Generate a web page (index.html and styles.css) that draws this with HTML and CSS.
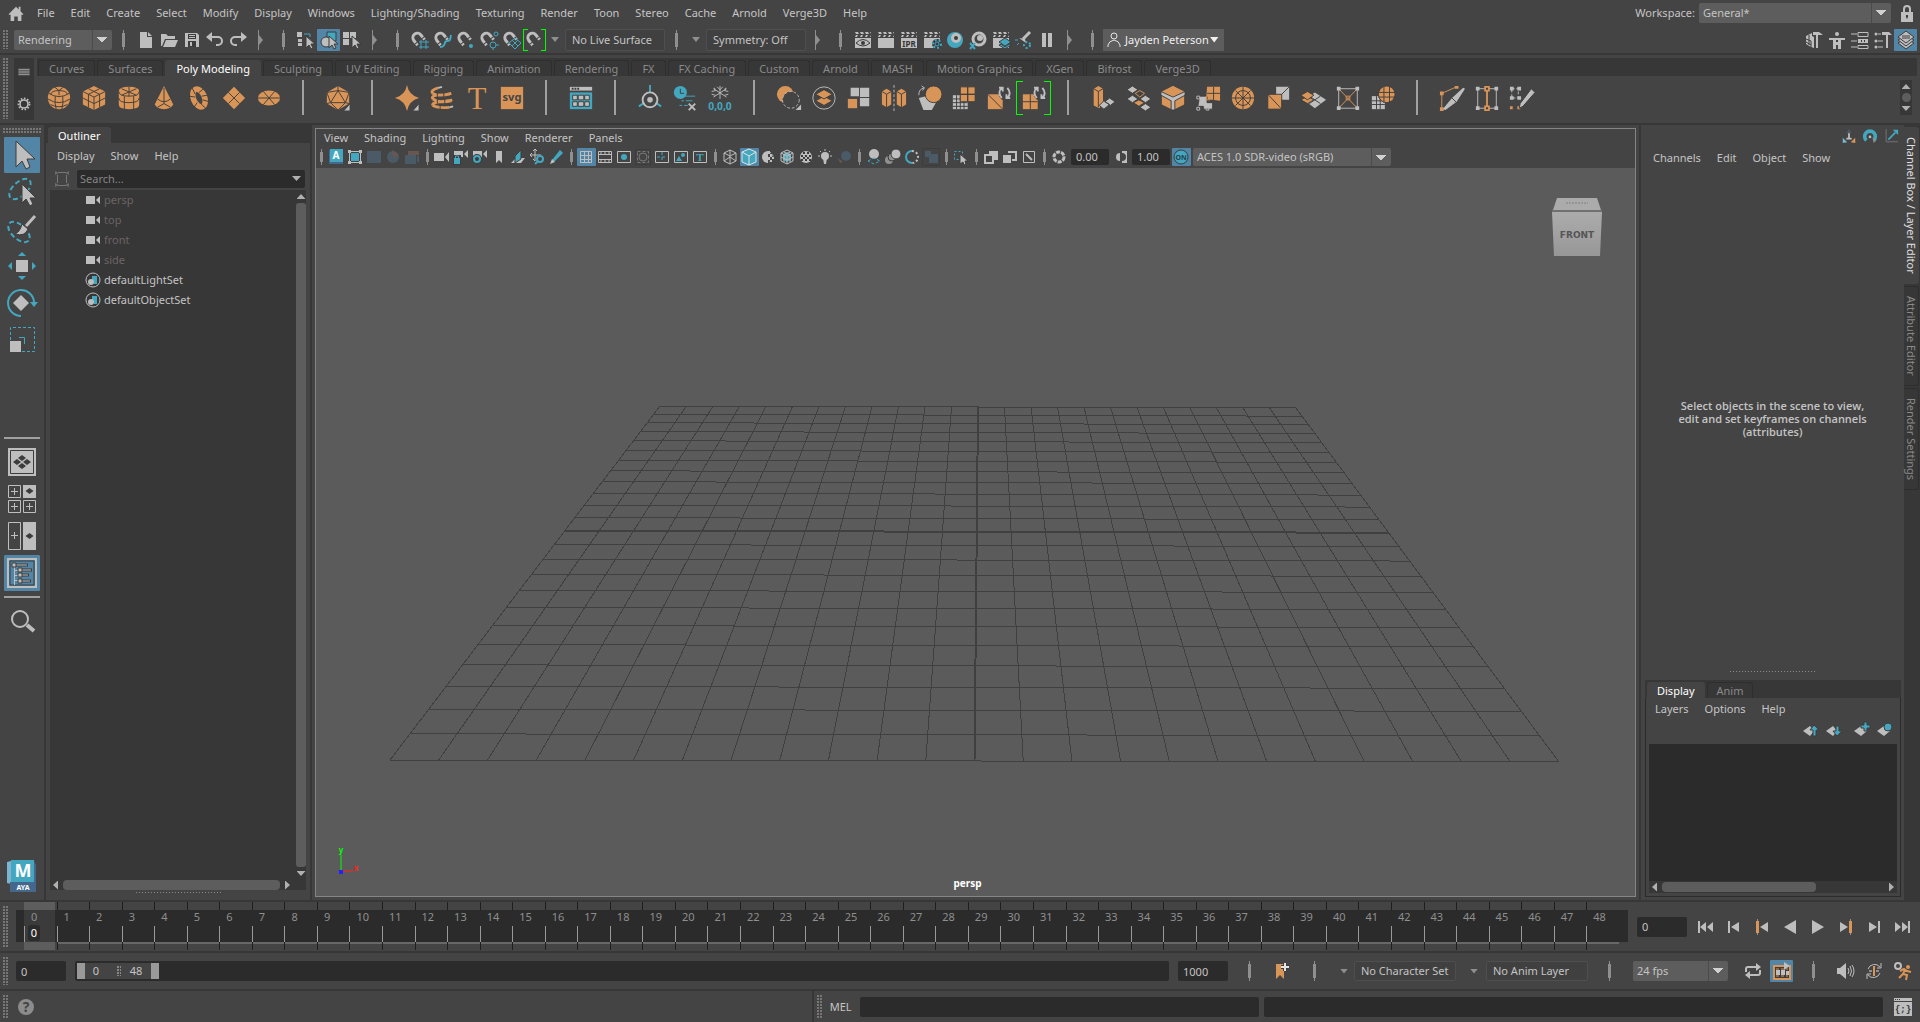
FILE: index.html
```html
<!DOCTYPE html>
<html lang="en">
<head>
    <meta charset="UTF-8">
    <meta name="viewport" content="width=device-width, initial-scale=1.0">
    <title>Maya</title>
    <link rel="stylesheet" href="styles.css">
</head>
<body>
    <!-- icon sprite -->
    <svg class="sprite" aria-hidden="true">
        <!-- 20px toolbar icons -->
        <symbol id="home" viewBox="0 0 20 20"><path class="g" d="M10 3L2 11v1h2v7h4v-5h4v5h4v-7h2v-1l-3-3V3h-2v3z"/></symbol>
        <symbol id="lock" viewBox="0 0 20 20"><path class="sg w2" d="M7 10V6a3 3 0 0 1 6 0v4"/><path class="g" d="M4 9h12v10H4z"/><path class="d" d="M9 12h2v2l-1 2-1-2z"/></symbol>
        <symbol id="new" viewBox="0 0 20 20"><path class="g" d="M4 2h7v5h5v11H4z"/><path class="g" d="M12 2l4 4h-4z"/></symbol>
        <symbol id="open" viewBox="0 0 20 20"><path class="g" d="M2 4h5l2 2h7v3H6l-3 7H2z"/><path class="g" d="M7 10h12l-3 7H4z"/></symbol>
        <symbol id="save" viewBox="0 0 20 20"><path class="g" d="M3 3h12l2 2v12H3z"/><path class="d" d="M6 4h8v5H6zM6 11h8v6H6z"/><path class="g" d="M7 5h6v1H7zM7 7h6v1H7zM8 12h2v4H8z"/></symbol>
        <symbol id="undo" viewBox="0 0 20 20"><path class="sg w2" d="M5 7h8a4 4 0 0 1 0 8h-2"/><path class="g" d="M1 7l6-5v10z"/></symbol>
        <symbol id="redo" viewBox="0 0 20 20"><path class="sg w2" d="M15 7H7a4 4 0 0 0 0 8h2"/><path class="g" d="M19 7l-6-5v10z"/></symbol>
        <symbol id="collapse" viewBox="0 0 20 20"><path class="m" d="M9 0h1v20H9zM10 5l4 5-4 5z"/></symbol>
        <symbol id="cursor" viewBox="0 0 20 20"><path class="g e" d="M10 6v12l3-3 2 4 2-1-2-4h4z"/></symbol>
        <symbol id="sel-hier" viewBox="0 0 20 20"><path class="g" d="M1 2h5v5H1zM2 9h4v3H2zM2 13h4v3H2z"/><path class="st" d="M8 4h6v3M14 9v2"/><use href="#cursor"/></symbol>
        <symbol id="sel-obj" viewBox="0 0 20 20"><path class="t e" d="M8 2h9v9H8z"/><circle class="g e" cx="7" cy="12" r="5"/><use href="#cursor"/></symbol>
        <symbol id="sel-comp" viewBox="0 0 20 20"><path class="g" d="M1 2h6v6H1zM8 2h6v6H8zM1 9h6v6H1z"/><use href="#cursor"/></symbol>
        <symbol id="magnet" viewBox="0 0 20 20"><g transform="rotate(-38 9 9)"><path class="sg w3" d="M4 10V7a4 4 0 0 1 9 0v3"/><path class="sg w3" d="M4 11v2M13 11v2"/></g></symbol>
        <symbol id="snap-grid" viewBox="0 0 20 20"><use href="#magnet"/><path class="st" d="M11 10v9M16 10v9M9 12h10M9 17h10"/></symbol>
        <symbol id="snap-curve" viewBox="0 0 20 20"><use href="#magnet"/><path class="st w2" d="M7 17c7 0 3-6 7-6s3-2 4-6"/></symbol>
        <symbol id="snap-point" viewBox="0 0 20 20"><use href="#magnet"/><circle class="t" cx="15" cy="16" r="2"/></symbol>
        <symbol id="snap-center" viewBox="0 0 20 20"><use href="#magnet"/><circle class="st" cx="17" cy="4" r="2"/><circle class="st" cx="14" cy="15" r="3"/><path class="st" d="M17 15h3M14 18v2"/></symbol>
        <symbol id="snap-plane" viewBox="0 0 20 20"><use href="#magnet"/><path class="st" d="M13 8l6 5-6 6-6-6zM10 10l6 6M16 10l-6 6"/></symbol>
        <symbol id="clap" viewBox="0 0 20 20"><path class="g" d="M2 2h3l1 2H3zM7 2h3l1 2H8zM12 2h3l1 2h-3zM17 2h1v2zM2 7h2l1-2H3zM7 7h2l1-2H8zM12 7h2l1-2h-2zM17 7h1V5zM2 8h16v10H2z"/></symbol>
        <symbol id="r-eye" viewBox="0 0 20 20"><use href="#clap"/><path class="sd" d="M3 13q7-7 14 0q-7 6-14 0z"/><circle class="d" cx="10" cy="13" r="2"/></symbol>
        <symbol id="r-ipr" viewBox="0 0 20 20"><use href="#clap"/><text class="ipr" x="10" y="17">IPR</text></symbol>
        <symbol id="r-set" viewBox="0 0 20 20"><use href="#clap"/><circle class="d" cx="15" cy="14" r="5"/><circle class="st w2 dash" cx="15" cy="14" r="4"/><circle class="st" cx="15" cy="14" r="2"/></symbol>
        <symbol id="r-hyper" viewBox="0 0 20 20"><circle class="t" cx="10" cy="10" r="8"/><circle class="g" cx="11" cy="8" r="5"/><circle class="d" cx="11" cy="8" r="2"/></symbol>
        <symbol id="r-hyperx" viewBox="0 0 20 20"><circle class="sg w3" cx="11" cy="9" r="6"/><circle class="g" cx="12" cy="8" r="3"/><path class="st w2" d="M2 13l5 6M7 13l-5 6"/></symbol>
        <symbol id="r-layers" viewBox="0 0 20 20"><use href="#clap"/><path class="t e" d="M14 8l6 4-6 4-6-4z"/><path class="t e" d="M8 15l6 4 6-4-2-1-4 3-4-3z"/></symbol>
        <symbol id="r-light" viewBox="0 0 20 20"><path class="sg w3" d="M9 9l7-7"/><path class="g" d="M5 8l6 1 1 4z"/><circle class="st w2 dash" cx="13" cy="15" r="3"/><path class="st" d="M1 10h3M3 15l2-2"/></symbol>
        <symbol id="r-pause" viewBox="0 0 20 20"><path class="g" d="M5 3h4v14H5zM11 3h4v14h-4z"/></symbol>
        <symbol id="user" viewBox="0 0 20 20"><circle class="sw" cx="10" cy="6" r="3"/><path class="sw" d="M4 17v-2q1-4 6-5q5 1 6 5v2"/></symbol>
        <symbol id="p-model" viewBox="0 0 20 20"><path class="g" d="M2 6l6-3v3l2 1v11l-3-1-5-3z"/><path class="g" d="M9 2h6l4 3h-5v13h-2V5H9z"/><path class="sd" d="M2 9l5 2v7M2 12l5 3M5 5v10"/></symbol>
        <symbol id="p-man" viewBox="0 0 20 20"><circle class="g" cx="10" cy="4" r="2"/><path class="g" d="M2 8h16v2h-4v9h-3v-4H9v4H6v-9H2z"/><path class="d" d="M9 10h2v2H9z"/></symbol>
        <symbol id="p-attr" viewBox="0 0 20 20"><path class="sg" d="M1 4h6M8 2.500h10v4H8zM1 11h6M1 17h6M8 15.500h10v3H8z"/><path class="g" d="M8 9h10v4H8z"/><path class="d" d="M11 10h1v2h-1zM14 10h1v2h-1z"/></symbol>
        <symbol id="p-tool" viewBox="0 0 20 20"><circle class="g" cx="3" cy="4" r="1.500"/><circle class="g" cx="3" cy="11" r="1.500"/><circle class="g" cx="3" cy="17" r="1.500"/><path class="sg" d="M5 4h3M5 11h5M5 17h5"/><path class="g" d="M9 2h7l3 3h-4v13h-2V5H9z"/></symbol>
        <symbol id="p-layers" viewBox="0 0 20 20"><path class="g e" d="M10 8l8 5-8 6-8-6z"/><path class="g e" d="M10 5l8 5-8 6-8-6z"/><path class="g e" d="M10 1l8 6-8 6-8-6z"/><path class="sd" d="M6 6h8M6 8h8"/></symbol>
        <symbol id="gear" viewBox="0 0 20 20"><circle class="sg w2" cx="10" cy="10" r="5"/><circle class="sg w2 dash" cx="10" cy="10" r="7"/></symbol>
        <symbol id="bars" viewBox="0 0 20 20"><path class="m" d="M3 6h14v2H3zM3 9h14v2H3zM3 12h14v2H3z"/></symbol>

        <!-- 28px shelf icons -->
        <symbol id="sphere" viewBox="0 0 28 28"><circle class="o" cx="14" cy="14" r="12"/><path class="sd" d="M3 9q11 7 22 0M2 15q12 8 24 0M5 21q9 5 18 0M14 6L9 2M14 6l5-4M14 6v5M14 6q-8 0-9 4M14 6q8 0 9 4M10 12q-1 8 1 14M18 12q1 8-1 14"/></symbol>
        <symbol id="cube" viewBox="0 0 28 28"><path class="o" d="M14 1l12 6v14l-12 6-12-6V7z"/><path class="sd" d="M2 7l12 6 12-6M14 13v14M8 4l12 6v14M20 4L8 10v14M2 14l12 6 12-6"/></symbol>
        <symbol id="cylinder" viewBox="0 0 28 28"><path class="o" d="M3 7q0-5 11-5t11 5v14q0 5-11 5T3 21z"/><path class="sd" d="M3 7q0 5 11 5t11-5M3 14q0 5 11 5t11-5M14 2v10M6 4l16 7M22 4L6 11M9 12v14M19 12v14"/></symbol>
        <symbol id="cone" viewBox="0 0 28 28"><path class="o" d="M14 1l10 20q-3 5-10 5T4 21z"/><path class="sd" d="M14 3v17M7 15q7 6 14 0M14 20l-7 4M14 20l7 4"/></symbol>
        <symbol id="torus" viewBox="0 0 28 28"><ellipse class="so w6" cx="14" cy="14" rx="6" ry="10" transform="rotate(-22 14 14)"/><path class="sd" d="M6 2l4 8M19 4l-5 4M3 12l7 1M17 12l6-1M12 19l-4 6M16 20l6 6M18 16l7 2"/></symbol>
        <symbol id="plane" viewBox="0 0 28 28"><path class="o" d="M14 2l12 12-12 12L2 14z"/><path class="sd" d="M8 8l12 12M20 8L8 20"/></symbol>
        <symbol id="disc" viewBox="0 0 28 28"><ellipse class="o" cx="14" cy="14" rx="12" ry="8"/><path class="sd" d="M2 14h24M8 7l12 14M20 7L8 21"/></symbol>
        <symbol id="platonic" viewBox="0 0 28 28"><path class="o" d="M14 1l12 7v12l-12 7-12-7V8z"/><path class="sd" d="M14 6L6 19h16zM14 1v5M14 6L2 8l4 11-4 1M14 6l12 2-4 11 4 1M6 19l8 8 8-8"/><path class="g e" d="M27 20v8h-7z"/></symbol>
        <symbol id="star" viewBox="0 0 28 28"><path class="o" d="M14 0q2 11 13 14q-11 3-13 14Q12 17 1 14Q12 11 14 0z"/><path class="g e" d="M27 20v8h-7z"/></symbol>
        <symbol id="helix" viewBox="0 0 28 28"><path class="so w3" d="M10 3q-9 3-6 6q7 4 20 0M4 15q-2-4 7-4t13-2M4 15q7 5 20 2M4 22q-1-3 9-4t12-2M4 22q4 3 18 2"/><path class="sg w2" d="M14 2l-4 1M22 24l4-1"/><path class="sd" d="M9 8v5M16 8v5M9 14v6M17 15v5M12 21v5"/></symbol>
        <symbol id="type" viewBox="0 0 28 28"><text class="type" x="14" y="26">T</text></symbol>
        <symbol id="svgfile" viewBox="0 0 28 28"><path class="o" d="M2 2h24v24H2z"/><text class="svgt" x="14" y="17">svg</text></symbol>
        <symbol id="uvwin" viewBox="0 0 28 28"><path class="g" d="M2 2h24v4H2z"/><path class="d" d="M4 3h2v2H4zM7 3h2v2H7zM10 3h2v2h-2z"/><path class="t" d="M2 8h24v18H2z"/><path class="g e" d="M5 11h5v5H5zM11 11h6v5h-6zM18 11h5v5h-5zM5 18h5v5H5zM11 18h6v5h-6zM18 18h5v5h-5z"/></symbol>
        <symbol id="pivot" viewBox="0 0 28 28"><path class="st w2" d="M14 0v8M2 23l6-4M26 23l-6-4"/><circle class="sg w2" cx="14" cy="16" r="8"/><circle class="g" cx="14" cy="16" r="3"/></symbol>
        <symbol id="history" viewBox="0 0 28 28"><circle class="t" cx="9" cy="8" r="7"/><path class="sd" d="M9 4v5h4"/><path class="st" d="M14 12h11M10 17h3M15 17h7M8 22h3M13 22h4"/><path class="sg w2" d="M18 20l7 7M25 20l-7 7"/></symbol>
        <symbol id="freeze" viewBox="0 0 28 28"><path class="sg" d="M14 1v14M7 4l14 9M21 4L7 13M11 2l3 3 3-3M5 7l4-1-1-3M23 7l-4-1 1-3M5 10l4 1M23 10l-4 1"/><text class="zeros" x="14" y="27">0,0,0</text></symbol>
        <symbol id="smooth" viewBox="0 0 28 28"><circle class="o" cx="10" cy="10" r="9"/><circle class="b" cx="16" cy="16" r="9"/><circle class="sg dots" cx="16" cy="16" r="9"/><path class="g" d="M27 21v6h-6z"/></symbol>
        <symbol id="boolean" viewBox="0 0 28 28"><circle class="sg" cx="14" cy="14" r="12"/><path class="o e" d="M14 12l9 5-9 5-9-5z"/><path class="o e" d="M14 5l9 5-9 5-9-5z"/></symbol>
        <symbol id="combine" viewBox="0 0 28 28"><path class="g" d="M5 3h9v9H5zM15 3h10v10H15zM15 14h10v9H15z"/><path class="o" d="M2 15h10v10H2z"/></symbol>
        <symbol id="mirror" viewBox="0 0 28 28"><path class="o" d="M1 7l5-3 5 3v14l-5 3-5-3zM17 7l5-3 5 3v14l-5 3-5-3z"/><path class="sd" d="M1 7l5 3 5-3M6 10v14M17 7l5 3 5-3M22 10v14"/><path class="sg dots" d="M14 0v28"/></symbol>
        <symbol id="project" viewBox="0 0 28 28"><path class="g" d="M3 14l12-3 7 7-5 9H8z"/><circle class="o e" cx="19" cy="10" r="9"/><path class="sg" d="M3 11Q3 4 9 3M6 1l3 2-2 3"/></symbol>
        <symbol id="remesh" viewBox="0 0 28 28"><path class="g" d="M2 11h16v15H2z"/><path class="sd" d="M2 15h16M2 19h16M2 23h16M6 11v15M10 11v15M14 11v15"/><path class="o e" d="M10 2h8v8h-8zM18 2h8v8h-8zM10 10h8v8h-8zM18 10h8v8h-8z"/></symbol>
        <symbol id="cycle" viewBox="0 0 28 28"><path class="sg w2" d="M17 14q-5-6 0-11M23 3q5 6 0 11M14 3h4v4M26 14h-4v-4"/></symbol>
        <symbol id="triangulate" viewBox="0 0 28 28"><path class="o" d="M2 10h16v16H2z"/><path class="sd" d="M2 10l16 16"/><path class="b" d="M14 0h14v16H17l-3-4z"/><use href="#cycle"/></symbol>
        <symbol id="quad" viewBox="0 0 28 28"><path class="o" d="M2 10h16v16H2z"/><path class="sd" d="M10 10v16M2 18h16"/><path class="b" d="M14 0h14v16H17l-3-4z"/><use href="#cycle"/></symbol>
        <symbol id="extrude" viewBox="0 0 28 28"><path class="o" d="M4 4l5-3 5 3v16l-4 5-6-3z"/><path class="sd" d="M4 4l5 3 5-3M9 7v17"/><path class="g e" d="M15 17l6 4-6 5-5-4zM21 14l6 4-5 4-6-4z"/></symbol>
        <symbol id="bridge" viewBox="0 0 28 28"><path class="g e" d="M8 1l6 4-6 4-6-4zM8 11l6 4-6 4-6-4zM22 11l6 4-6 4-6-4zM22 20l6 4-6 4-6-4z"/><path class="so" d="M16 6l5 3-5 4-5-4z"/><path class="o e" d="M15 16l6 3-6 4-6-4z"/></symbol>
        <symbol id="bevel" viewBox="0 0 28 28"><path class="o" d="M14 1l12 6v14l-12 6-12-6V7z"/><path class="g e" d="M1 7l13 6 13-6v4l-11 6v10h-4V17L1 11z"/><path class="o" d="M14 1l11 6-11 5L3 7z"/></symbol>
        <symbol id="appendp" viewBox="0 0 28 28"><path class="o" d="M13 2h14v15l-15-2z"/><path class="sd" d="M20 2v14M13 9h14"/><path class="g e" d="M5 12h8v7h6v7H9v-3H3z"/><path class="sg" d="M2 12h3v3H2zM2 24h3v3H2zM12 24h3v3h-3z"/><path class="so" d="M12 12h4v4h-4z"/></symbol>
        <symbol id="fill" viewBox="0 0 28 28"><circle class="o" cx="14" cy="14" r="12"/><circle class="sd" cx="14" cy="14" r="8"/><path class="sd" d="M14 2v24M2 14h24M6 6l16 16M22 6L6 22"/></symbol>
        <symbol id="collapse-e" viewBox="0 0 28 28"><path class="g" d="M12 2h14v14H18l-6-5z"/><path class="sd" d="M26 2L16 12"/><path class="o e" d="M3 10h15v16H3z"/><path class="sd" d="M3 10l15 16"/></symbol>
        <symbol id="flip" viewBox="0 0 28 28"><path class="g" d="M16 8l12 8-12 9-12-9z"/><path class="sd" d="M10 12l12 8M22 12L10 20"/><path class="o e" d="M8 12l7 4-7 4-7-4z"/><path class="o e" d="M8 7l7 4-7 5-7-5z"/></symbol>
        <symbol id="lattice" viewBox="0 0 28 28"><path class="sg" d="M4 4h20v21H4z"/><path class="so" d="M4 4l20 21M24 4L4 25M12 12h4v4h-4z"/><path class="g" d="M2 2h4v4H2zM22 2h4v4h-4zM2 23h4v4H2zM22 23h4v4h-4z"/></symbol>
        <symbol id="sculpt" viewBox="0 0 28 28"><path class="g" d="M2 12h14v14H2z"/><path class="sd" d="M2 17h14M2 21h14M7 12v14M11 12v14"/><circle class="o e" cx="18" cy="10" r="9"/><path class="sd" d="M15 2v17M21 2v17M9 8h18M9 13h18"/></symbol>
        <symbol id="multicut" viewBox="0 0 28 28"><path class="so" d="M3 25V9l16-7"/><path class="o" d="M1 7h4v4H1zM17 1h4v3h-4zM1 24h4v4H1z"/><path class="g" d="M26 3l2 1-9 14-12 9-3-1 10-12z"/><path class="sd" d="M14 14l5 5"/></symbol>
        <symbol id="connect" viewBox="0 0 28 28"><path class="sg" d="M4 4h20v21H4z"/><path class="so w2" d="M14 4v21"/><path class="g" d="M2 2h4v4H2zM22 2h4v4h-4zM2 23h4v4H2zM22 23h4v4h-4z"/><path class="o" d="M11 1h6v6h-6zM11 22h6v6h-6z"/><path class="d" d="M13 3h2v2h-2zM13 24h2v2h-2z"/></symbol>
        <symbol id="quaddraw" viewBox="0 0 28 28"><path class="sg dots" d="M3 4h7v10H3z"/><path class="g" d="M1 2h4v4H1zM9 2h4v4H9zM1 12h4v4H1zM9 12h4v4H9z"/><path class="o" d="M1 23h3v3H1zM9 23h3v3H9z"/><path class="g e" d="M24 4l4 4-13 15-4 2 1-5z"/></symbol>

        <!-- 36px tool box icons -->
        <symbol id="t-cursor" viewBox="0 0 36 36"><path class="g e" d="M12 4v26l6-6 4 8 4-2-3-8h8z"/></symbol>
        <symbol id="t-lasso" viewBox="0 0 36 36"><ellipse class="st w2 lasso" cx="16" cy="15" rx="13" ry="7" transform="rotate(-42 16 15)"/><path class="g e" d="M18 10v19l4-4 4 7 3-2-3-6h6z"/></symbol>
        <symbol id="t-paint" viewBox="0 0 36 36"><ellipse class="st w2 lasso" cx="15" cy="21" rx="13" ry="7" transform="rotate(42 15 21)"/><path class="sg w3" d="M31 5l-9 10"/><path class="g e" d="M18 13l6 5q-3 8-13 5q5-2 7-10z"/></symbol>
        <symbol id="t-move" viewBox="0 0 36 36"><path class="g" d="M12 12h12v12H12z"/><path class="t" d="M18 4l4 4h-8zM18 32l4-4h-8zM4 18l4-4v8zM32 18l-4-4v8z"/></symbol>
        <symbol id="t-rotate" viewBox="0 0 36 36"><path class="st w2" d="M17 31a13 13 0 1 1 13-14"/><path class="t" d="M26 17h8l-4 5z"/><path class="g" d="M17 10l8 8-8 8-8-8z"/></symbol>
        <symbol id="t-scale" viewBox="0 0 36 36"><path class="st dots" d="M6.500 18V5.500h24v24H18"/><path class="st" d="M15 15.500h5.500V22"/><path class="g" d="M6 19h11v11H6z"/></symbol>
        <symbol id="l-single" viewBox="0 0 36 36"><path class="g" d="M4 4h28v28H4z"/><path class="sd" d="M6.500 6.500h23v23h-23z"/><path class="d" d="M18 11l4 3-4 3-4-3zM13 15l4 3-4 3-4-3zM23 15l4 3-4 3-4-3zM18 19l4 3-4 3-4-3z"/></symbol>
        <symbol id="l-four" viewBox="0 0 36 36"><path class="sg" d="M4.500 4.500h12v12h-12zM4.500 19.500h12v12h-12zM19.500 19.500h12v12h-12zM10.500 7v7M7 10.500h7M10.500 22v7M7 25.500h7M25.500 22v7M22 25.500h7"/><path class="g" d="M19 4h13v13H19z"/><path class="d" d="M25.500 7l4 3-4 3-4-3z"/></symbol>
        <symbol id="l-two" viewBox="0 0 36 36"><path class="sg" d="M4.500 4.500h12v27h-12zM10.500 14v7M7 17.500h7"/><path class="g" d="M19 4h13v28H19z"/><path class="d" d="M25.500 15l4 3-4 3-4-3z"/></symbol>
        <symbol id="l-outliner" viewBox="0 0 36 36"><path class="sg w2" d="M4 4h28v28H4z"/><path class="sd" d="M6 6h24v24H6z"/><path class="sg" d="M10.500 10v20M11 15.500h5M11 20.500h5M11 25.500h5"/><path class="sd w3" d="M12 10h12M18 15h10M18 20h7M18 26h9"/><path class="sg" d="M12 10h11M18 15h9M18 20h6M18 26h8"/><path class="g e" d="M8 8h4v4H8zM14 13h4v4h-4zM14 18h4v4h-4zM14 24h4v4h-4z"/></symbol>
        <symbol id="t-search" viewBox="0 0 36 36"><circle class="sg w2" cx="16" cy="16" r="8"/><path class="sg w4" d="M23 22l7 6"/></symbol>
        <symbol id="maya" viewBox="0 0 36 36"><path class="lb" d="M3 3l4-1v23l-4-1z"/><path class="t" d="M7 1h23v22H7z"/><path class="nb" d="M6 23h24V2l2 4v27H6z"/><text class="maya-m" x="19" y="18">M</text><text class="maya-s" x="19" y="31">AYA</text></symbol>

        <!-- 18px panel icons -->
        <symbol id="v-a" viewBox="0 0 18 18"><path class="nb" d="M2 2h14v14H2z"/><path class="t" d="M3 1h13v13H3z"/><text class="va" x="9" y="11">A</text></symbol>
        <symbol id="v-frame" viewBox="0 0 18 18"><path class="sg" d="M3.500 3.500h11v11h-11z"/><path class="g" d="M2 2h3v3H2zM13 2h3v3h-3zM2 13h3v3H2zM13 13h3v3h-3z"/><path class="t" d="M5 5h8v8H5z"/></symbol>
        <symbol id="v-dim1" viewBox="0 0 18 18"><path class="nt" d="M2 3h14v12H2z"/></symbol>
        <symbol id="v-dim2" viewBox="0 0 18 18"><circle class="nt" cx="9" cy="9" r="6"/><path class="nr" d="M8 2l7 5-6 3z"/></symbol>
        <symbol id="v-dim3" viewBox="0 0 18 18"><path class="nt" d="M2 7h11v9H2z"/><path class="nr" d="M5 3h11v4H5z"/><path class="nt" d="M14 8h2v6h-2z"/></symbol>
        <symbol id="v-cam" viewBox="0 0 18 18"><path class="g" d="M1 5h10v8H1zM12 9l4-5v10z"/></symbol>
        <symbol id="v-camlock" viewBox="0 0 18 18"><path class="g" d="M2 3h9v6H2zM12 6l4-4v8z"/><path class="d" d="M1 7h8v10H1z"/><path class="t" d="M2 10h6v6H2z"/><path class="st" d="M3.500 10V8h3v2"/></symbol>
        <symbol id="v-camgear" viewBox="0 0 18 18"><path class="g" d="M2 3h9v6H2zM12 6l4-4v8z"/><circle class="d" cx="6" cy="11" r="5"/><circle class="st w2" cx="6" cy="11" r="3"/></symbol>
        <symbol id="v-mark" viewBox="0 0 18 18"><path class="g" d="M6 3h6v12l-3-3-3 3z"/></symbol>
        <symbol id="v-plane" viewBox="0 0 18 18"><path class="g" d="M2 15l5-5h9l-4 5z"/><path class="t e" d="M6 8l6-6v9l-6 4z"/></symbol>
        <symbol id="v-pan" viewBox="0 0 18 18"><path class="sg" d="M7 1v12M2 7h11M5 3l2-2 2 2M4 5L2 7l2 2M5 11l2 2"/><circle class="st w2" cx="12" cy="11" r="3"/><path class="st w2" d="M10 13l-3 3"/></symbol>
        <symbol id="v-pencil" viewBox="0 0 18 18"><path class="t" d="M13 2l3 3-9 9-3 1 1-3z"/><path class="g" d="M5 11l3 3-5 2z"/></symbol>
        <symbol id="v-grid" viewBox="0 0 18 18"><path class="sg" d="M3.500 3.500h11v11h-11zM7.500 3v12M11.500 3v12M3 7.500h12M3 11.500h12"/></symbol>
        <symbol id="v-film" viewBox="0 0 18 18"><path class="sg" d="M2.500 3.500h13v11h-13zM3 6.500h12M3 11.500h12"/><path class="sg dash" d="M4 5h10M4 13h10"/></symbol>
        <symbol id="v-res" viewBox="0 0 18 18"><path class="sg" d="M2.500 3.500h13v11h-13z"/><circle class="t" cx="9" cy="9" r="3"/></symbol>
        <symbol id="v-gate" viewBox="0 0 18 18"><path class="sd" d="M1.500 1.500h15v15h-15z"/><circle class="sm" cx="9" cy="9" r="4"/><path class="sm dots" d="M3.500 3.500h11v11h-11z"/></symbol>
        <symbol id="v-safe" viewBox="0 0 18 18"><path class="sg" d="M2.500 3.500h13v11h-13z"/><path class="st dots" d="M9 4v10M4 9h10"/></symbol>
        <symbol id="v-action" viewBox="0 0 18 18"><path class="sg" d="M2.500 3.500h13v11h-13z"/><circle class="t" cx="11" cy="7" r="2"/><path class="t" d="M4 13l3-5 3 5z"/></symbol>
        <symbol id="v-title" viewBox="0 0 18 18"><path class="sg" d="M2.500 3.500h13v11h-13z"/><text class="vt" x="9" y="13">T</text></symbol>
        <symbol id="v-wire" viewBox="0 0 18 18"><path class="sg" d="M9 2l6 3v8l-6 3-6-3V5zM3 5l6 3 6-3M9 8v8M9 2v5M3 13l6-4 6 4"/></symbol>
        <symbol id="v-shade" viewBox="0 0 18 18"><path class="t" d="M9 1l7 3v10l-7 3-7-3V4z"/><path class="sw" d="M9 1l7 3v10l-7 3-7-3V4zM2 4l7 4 7-4M9 8v9"/></symbol>
        <symbol id="v-half" viewBox="0 0 18 18"><circle class="sg dash" cx="9" cy="9" r="5"/><path class="g" d="M9 3a6 6 0 0 0 0 12z"/><path class="g" d="M9 3h2v3H9zM11 6h2v3h-2zM9 9h2v3H9zM13 9h2v2h-2zM11 12h2v2h-2z"/></symbol>
        <symbol id="v-wiresh" viewBox="0 0 18 18"><path class="t" d="M9 4l4 2v6l-4 2-4-2V6z"/><path class="sg" d="M9 2l6 3v8l-6 3-6-3V5zM3 5l6 3 6-3M9 8v8M6 4l6 3v7M12 4L6 7v7M3 9l6 3 6-3"/></symbol>
        <symbol id="v-tex" viewBox="0 0 18 18"><circle class="g" cx="9" cy="9" r="6"/><path class="d" d="M6 4h2v2H6zM10 4h2v2h-2zM4 7h2v2H4zM8 7h2v2H8zM12 7h2v2h-2zM6 9h2v2H6zM10 9h2v2h-2zM4 11h2v2H4zM8 11h2v2H8zM12 11h2v2h-2z"/></symbol>
        <symbol id="v-light" viewBox="0 0 18 18"><circle class="g" cx="9" cy="8" r="4"/><path class="g" d="M7 10h4l-1 6H8z"/><path class="sg" d="M9 1v2M2 8h2M14 8h2M4 3l1 1M14 3l-1 1"/></symbol>
        <symbol id="v-shadow" viewBox="0 0 18 18"><circle class="nt" cx="11" cy="8" r="5"/><path class="nr" d="M3 10l5 4-3 1z"/></symbol>
        <symbol id="v-ao" viewBox="0 0 18 18"><circle class="g" cx="9" cy="6" r="5"/><path class="st dots" d="M3 13l6-3 6 3-6 3z"/></symbol>
        <symbol id="v-blur" viewBox="0 0 18 18"><circle class="m" cx="5" cy="12" r="4"/><circle class="m e" cx="8" cy="9" r="4"/><circle class="g e" cx="12" cy="6" r="5"/></symbol>
        <symbol id="v-aa" viewBox="0 0 18 18"><path class="st w2" d="M9 3a6 6 0 0 0 0 12"/><path class="sg w2 dash" d="M9 3a6 6 0 0 1 0 12"/></symbol>
        <symbol id="v-dof" viewBox="0 0 18 18"><path class="sd" d="M.5.5h17v17H.5z"/><path class="nt" d="M3 3h6v6H3zM7 6h9v9H7z"/></symbol>
        <symbol id="v-iso" viewBox="0 0 18 18"><path class="st dash" d="M2.500 3.500h8v8h-8z"/><path class="g e" d="M8 6v10l3-2 1 3 2-1-1-3h3z"/></symbol>
        <symbol id="v-xray" viewBox="0 0 18 18"><path class="g" d="M7 3h9v9h-5V8H7z"/><path class="sg w2" d="M3 7h8v8H3z"/></symbol>
        <symbol id="v-xj" viewBox="0 0 18 18"><path class="sg w2" d="M7 4h8v8h-4"/><path class="g" d="M2 7h8v8H2z"/></symbol>
        <symbol id="v-exp" viewBox="0 0 18 18"><path class="sg" d="M3.500 3.500h11v11h-11z"/><path class="sg w2" d="M6 6l6 6"/></symbol>
        <symbol id="v-iris" viewBox="0 0 18 18"><circle class="sg w3 iris" cx="9" cy="9" r="5"/></symbol>
        <symbol id="v-gamma" viewBox="0 0 18 18"><path class="g" d="M11 3h5v12h-5v-2a4 4 0 0 0 0-8z"/><path class="g" d="M9 5a4 4 0 0 0 0 8z"/></symbol>
        <symbol id="v-on" viewBox="0 0 18 18"><circle class="t" cx="9" cy="9" r="7"/><circle class="sd" cx="9" cy="9" r="7"/><text class="ont" x="9" y="12">ON</text></symbol>
        <symbol id="cam-row" viewBox="0 0 18 18"><path class="g" d="M2 5h9v8H2zM12 9l4-4v8z"/></symbol>
        <symbol id="set-row" viewBox="0 0 18 18"><circle class="sg" cx="9" cy="9" r="7"/><path class="t" d="M8 5h5v8h-3l-2-4z"/><circle class="g" cx="7" cy="11" r="3"/></symbol>
        <symbol id="o-filter" viewBox="0 0 18 18"><path class="sm" d="M5 2.500h8M5 15.500h8M4.500 5v8M13.500 5v8"/><path class="dm" d="M2 1l4 2-4 2zM16 1l-4 2 4 2zM2 13l4 2-4 2zM16 13l-4 2 4 2z"/></symbol>
        <symbol id="c-manip" viewBox="0 0 18 18"><path class="sg w2" d="M9 5v7"/><path class="nt" d="M6 6l3-5 3 5z"/><path class="lb" d="M2 17v-6l5 5z"/><path class="o" d="M16 17v-6l-5 5z"/><path class="g" d="M6 11h6v2H6z"/></symbol>
        <symbol id="c-speed" viewBox="0 0 18 18"><path class="st w4" d="M5 14a6 6 0 1 1 8 0"/><path class="m" d="M12 10l4 4-3 3z"/><circle class="g" cx="9" cy="10" r="1.500"/></symbol>
        <symbol id="c-graph" viewBox="0 0 18 18"><path class="sm" d="M3.500 1v14.500H17"/><path class="st w2" d="M6 13l8-8"/><path class="t" d="M17 2v6l-6-6z"/></symbol>
        <symbol id="ly-base" viewBox="0 0 18 18"><path class="g" d="M1 10l7-5 4 5-4 5z"/></symbol>
        <symbol id="ly-up" viewBox="0 0 18 18"><use href="#ly-base"/><path class="t e" d="M12 4l5 5h-3v6h-3V9H8z"/></symbol>
        <symbol id="ly-down" viewBox="0 0 18 18"><use href="#ly-base"/><path class="t e" d="M12 15l5-5h-3V5h-3v5H8z"/></symbol>
        <symbol id="ly-new" viewBox="0 0 18 18"><path class="g" d="M1 10l7-5 6 5-6 5z"/><path class="t e" d="M11 1h3v3h3v3h-3v3h-3V7H8V4h3z"/></symbol>
        <symbol id="ly-sel" viewBox="0 0 18 18"><path class="g" d="M1 10l7-5 6 5-6 5z"/><circle class="t e" cx="12" cy="6" r="4"/></symbol>

        <!-- playback -->
        <symbol id="k-start" viewBox="0 0 20 20"><path class="g" d="M2 4h2v12H2zM10 5v10l-6-5zM17 5v10l-6-5z"/></symbol>
        <symbol id="k-back" viewBox="0 0 20 20"><path class="g" d="M4 4h2v12H4zM15 5v10l-8-5z"/></symbol>
        <symbol id="k-prev" viewBox="0 0 20 20"><path class="o" d="M4 4h3v12H4z"/><path class="m" d="M5 2h1v2H5zM5 16h1v2H5z"/><path class="g" d="M16 5v10l-8-5z"/></symbol>
        <symbol id="k-rev" viewBox="0 0 20 20"><path class="g" d="M16 3v14L4 10z"/></symbol>
        <symbol id="k-play" viewBox="0 0 20 20"><path class="g" d="M4 3v14l12-7z"/></symbol>
        <symbol id="k-next" viewBox="0 0 20 20"><path class="o" d="M13 4h3v12h-3z"/><path class="m" d="M14 2h1v2h-1zM14 16h1v2h-1z"/><path class="g" d="M4 5v10l8-5z"/></symbol>
        <symbol id="k-fwd" viewBox="0 0 20 20"><path class="g" d="M14 4h2v12h-2zM5 5v10l8-5z"/></symbol>
        <symbol id="k-end" viewBox="0 0 20 20"><path class="g" d="M16 4h2v12h-2zM10 5v10l6-5zM3 5v10l6-5z"/></symbol>
        <symbol id="b-mark" viewBox="0 0 20 20"><path class="o" d="M4 3h8v15l-4-4-4 4z"/><path class="sd w4" d="M13 2v8M9 6h8"/><path class="sw w2" d="M13 2v8M9 6h8"/></symbol>
        <symbol id="loop" viewBox="0 0 20 20"><path class="sg w2" d="M3 11V8q0-2 2-2h9M17 9v3q0 2-2 2H6"/><path class="g" d="M13 2l5 4-5 4zM7 10v8l-5-4z"/></symbol>
        <symbol id="film" viewBox="0 0 20 20"><path class="d" d="M2 4h16v14H2z"/><path class="so w2" d="M2 5h16v13H2z"/><path class="so dots" d="M4 8h12M4 15h12"/><path class="g" d="M4 9h4v5H4zM9 9h4v5H9zM14 10h3v4h-3zM12 1l6 4-6 4z"/></symbol>
        <symbol id="sound" viewBox="0 0 20 20"><path class="g" d="M2 7h3l6-5v16l-6-5H2z"/><path class="sg" d="M13 7q2 3 0 6M15 5q3 5 0 10M17 4q4 6 0 12"/></symbol>
        <symbol id="autokey" viewBox="0 0 20 20"><path class="sg" d="M4 8a7 7 0 0 1 12-2M16 12a7 7 0 0 1-12 2M17 2v5h-4M3 18v-5h4"/><path class="o" d="M9 5h2v10H9z"/><path class="m" d="M5 9h3v2H5zM12 9h3v2h-3z"/></symbol>
        <symbol id="runner" viewBox="0 0 20 20"><circle class="sg w2" cx="5" cy="5" r="3"/><circle class="o" cx="15" cy="6" r="2"/><path class="so w2" d="M7 10l4-2 3 2 4 1M12 9l-2 4-4 4M10 13l4 1-1 5"/></symbol>
        <symbol id="help" viewBox="0 0 20 20"><circle class="hm" cx="10" cy="10" r="8"/><text class="q" x="10" y="15">?</text></symbol>
        <symbol id="script" viewBox="0 0 20 20"><path class="g" d="M1 1h18v3H1zM1 5h18v14H1z"/><path class="d" d="M2 2h1v1H2zM4 2h1v1H4zM6 2h1v1H6z"/><text class="br" x="10" y="15">{;}</text></symbol>
    </svg>

    <header class="menubar">
        <button class="home" aria-label="Home"><svg><use href="#home"/></svg></button>
        <nav class="menu">
            <button>File</button><button>Edit</button><button>Create</button><button>Select</button><button>Modify</button><button>Display</button><button>Windows</button><button>Lighting/Shading</button><button>Texturing</button><button>Render</button><button>Toon</button><button>Stereo</button><button>Cache</button><button>Arnold</button><button>Verge3D</button><button>Help</button>
        </nav>
        <div class="workspace">
            <label for="workspace">Workspace:</label>
            <span class="select ws"><select id="workspace"><option>General*</option></select></span>
            <button class="tb" aria-label="Lock workspace"><svg><use href="#lock"/></svg></button>
        </div>
    </header>

    <div class="statusline">
        <span class="grip"></span>
        <span class="select mode"><select aria-label="Menu set"><option>Rendering</option></select></span>
        <i class="sep"></i>
        <button class="tb" aria-label="New scene"><svg><use href="#new"/></svg></button>
        <button class="tb" aria-label="Open scene"><svg><use href="#open"/></svg></button>
        <button class="tb" aria-label="Save scene"><svg><use href="#save"/></svg></button>
        <button class="tb" aria-label="Undo"><svg><use href="#undo"/></svg></button>
        <button class="tb" aria-label="Redo"><svg><use href="#redo"/></svg></button>
        <button class="fold" aria-label="Collapse"><svg><use href="#collapse"/></svg></button>
        <i class="sep"></i>
        <button class="tb" aria-label="Select by hierarchy"><svg><use href="#sel-hier"/></svg></button>
        <button class="tb on" aria-label="Select by object"><svg><use href="#sel-obj"/></svg></button>
        <button class="tb" aria-label="Select by component"><svg><use href="#sel-comp"/></svg></button>
        <button class="fold" aria-label="Collapse"><svg><use href="#collapse"/></svg></button>
        <i class="sep"></i>
        <button class="tb" aria-label="Snap to grids"><svg><use href="#snap-grid"/></svg></button>
        <button class="tb" aria-label="Snap to curves"><svg><use href="#snap-curve"/></svg></button>
        <button class="tb" aria-label="Snap to points"><svg><use href="#snap-point"/></svg></button>
        <button class="tb" aria-label="Snap to center"><svg><use href="#snap-center"/></svg></button>
        <button class="tb" aria-label="Snap to view planes"><svg><use href="#snap-plane"/></svg></button>
        <button class="tb bracket" aria-label="Make live"><svg><use href="#magnet"/></svg></button>
        <i class="caret"></i>
        <button class="field">No Live Surface</button>
        <i class="sep"></i>
        <i class="caret"></i>
        <button class="field">Symmetry: Off</button>
        <button class="fold" aria-label="Collapse"><svg><use href="#collapse"/></svg></button>
        <i class="sep"></i>
        <button class="tb" aria-label="Render view"><svg><use href="#r-eye"/></svg></button>
        <button class="tb" aria-label="Render frame"><svg><use href="#clap"/></svg></button>
        <button class="tb" aria-label="IPR render"><svg><use href="#r-ipr"/></svg></button>
        <button class="tb" aria-label="Render settings"><svg><use href="#r-set"/></svg></button>
        <button class="tb" aria-label="Hypershade"><svg><use href="#r-hyper"/></svg></button>
        <button class="tb" aria-label="Texture reload"><svg><use href="#r-hyperx"/></svg></button>
        <button class="tb" aria-label="Render setup"><svg><use href="#r-layers"/></svg></button>
        <button class="tb" aria-label="Light editor"><svg><use href="#r-light"/></svg></button>
        <button class="tb" aria-label="Pause"><svg><use href="#r-pause"/></svg></button>
        <button class="fold" aria-label="Collapse"><svg><use href="#collapse"/></svg></button>
        <i class="sep"></i>
        <button class="account"><svg><use href="#user"/></svg>Jayden Peterson</button>
        <div class="sidebar-toggles">
            <button class="tb" aria-label="Modeling toolkit"><svg><use href="#p-model"/></svg></button>
            <button class="tb" aria-label="HumanIK"><svg><use href="#p-man"/></svg></button>
            <button class="tb" aria-label="Attribute editor"><svg><use href="#p-attr"/></svg></button>
            <button class="tb" aria-label="Tool settings"><svg><use href="#p-tool"/></svg></button>
            <button class="tb on" aria-label="Channel box"><svg><use href="#p-layers"/></svg></button>
        </div>
    </div>

    <section class="shelf">
        <span class="grip"></span>
        <div class="shelf-options">
            <button aria-label="Shelf tabs"><svg><use href="#bars"/></svg></button>
            <button aria-label="Shelf settings"><svg><use href="#gear"/></svg></button>
        </div>
        <div class="shelf-body">
            <div class="tabs shelf-tabs">
                <button>Curves</button><button>Surfaces</button><button class="active">Poly Modeling</button><button>Sculpting</button><button>UV Editing</button><button>Rigging</button><button>Animation</button><button>Rendering</button><button>FX</button><button>FX Caching</button><button>Custom</button><button>Arnold</button><button>MASH</button><button>Motion Graphics</button><button>XGen</button><button>Bifrost</button><button>Verge3D</button>
            </div>
            <div class="shelf-items">
                <button aria-label="Sphere"><svg><use href="#sphere"/></svg></button>
                <button aria-label="Cube"><svg><use href="#cube"/></svg></button>
                <button aria-label="Cylinder"><svg><use href="#cylinder"/></svg></button>
                <button aria-label="Cone"><svg><use href="#cone"/></svg></button>
                <button aria-label="Torus"><svg><use href="#torus"/></svg></button>
                <button aria-label="Plane"><svg><use href="#plane"/></svg></button>
                <button aria-label="Disc"><svg><use href="#disc"/></svg></button>
                <i class="divider"></i>
                <button aria-label="Platonic solid"><svg><use href="#platonic"/></svg></button>
                <i class="divider"></i>
                <button aria-label="Super shape"><svg><use href="#star"/></svg></button>
                <button aria-label="Sweep mesh"><svg><use href="#helix"/></svg></button>
                <button aria-label="Type"><svg><use href="#type"/></svg></button>
                <button aria-label="SVG"><svg><use href="#svgfile"/></svg></button>
                <i class="divider"></i>
                <button aria-label="Content window"><svg><use href="#uvwin"/></svg></button>
                <i class="divider"></i>
                <button aria-label="Center pivot"><svg><use href="#pivot"/></svg></button>
                <button aria-label="Delete history"><svg><use href="#history"/></svg></button>
                <button aria-label="Freeze transformations"><svg><use href="#freeze"/></svg></button>
                <i class="divider"></i>
                <button aria-label="Smooth"><svg><use href="#smooth"/></svg></button>
                <button aria-label="Boolean"><svg><use href="#boolean"/></svg></button>
                <button aria-label="Combine"><svg><use href="#combine"/></svg></button>
                <button aria-label="Mirror"><svg><use href="#mirror"/></svg></button>
                <button aria-label="Conform"><svg><use href="#project"/></svg></button>
                <button aria-label="Remesh"><svg><use href="#remesh"/></svg></button>
                <button aria-label="Triangulate"><svg><use href="#triangulate"/></svg></button>
                <button class="bracket" aria-label="Quadrangulate"><svg><use href="#quad"/></svg></button>
                <i class="divider"></i>
                <button aria-label="Extrude"><svg><use href="#extrude"/></svg></button>
                <button aria-label="Bridge"><svg><use href="#bridge"/></svg></button>
                <button aria-label="Bevel"><svg><use href="#bevel"/></svg></button>
                <button aria-label="Append polygon"><svg><use href="#appendp"/></svg></button>
                <button aria-label="Circularize"><svg><use href="#fill"/></svg></button>
                <button aria-label="Collapse edge"><svg><use href="#collapse-e"/></svg></button>
                <button aria-label="Extract"><svg><use href="#flip"/></svg></button>
                <button aria-label="Merge"><svg><use href="#lattice"/></svg></button>
                <button aria-label="Smooth proxy"><svg><use href="#sculpt"/></svg></button>
                <i class="divider"></i>
                <button aria-label="Multi-cut"><svg><use href="#multicut"/></svg></button>
                <button aria-label="Connect"><svg><use href="#connect"/></svg></button>
                <button aria-label="Quad draw"><svg><use href="#quaddraw"/></svg></button>
                <div class="shelf-scroll"><i class="arrow up"></i><i class="knob"></i><i class="arrow down"></i></div>
            </div>
        </div>
    </section>

    <main class="workarea">
        <aside class="toolbox">
            <span class="grip-h"></span>
            <button class="on" aria-label="Select tool"><svg><use href="#t-cursor"/></svg></button>
            <button aria-label="Lasso tool"><svg><use href="#t-lasso"/></svg></button>
            <button aria-label="Paint selection"><svg><use href="#t-paint"/></svg></button>
            <button aria-label="Move"><svg><use href="#t-move"/></svg></button>
            <button aria-label="Rotate"><svg><use href="#t-rotate"/></svg></button>
            <button aria-label="Scale"><svg><use href="#t-scale"/></svg></button>
            <hr class="tall">
            <button aria-label="Single view"><svg><use href="#l-single"/></svg></button>
            <button aria-label="Four view"><svg><use href="#l-four"/></svg></button>
            <button aria-label="Two view"><svg><use href="#l-two"/></svg></button>
            <button class="on" aria-label="Outliner and view"><svg><use href="#l-outliner"/></svg></button>
            <hr>
            <button aria-label="Search"><svg><use href="#t-search"/></svg></button>
            <svg class="maya-logo"><use href="#maya"/></svg>
        </aside>

        <section class="outliner">
            <div class="tabs"><button class="active">Outliner</button></div>
            <nav class="menu"><button>Display</button><button>Show</button><button>Help</button></nav>
            <div class="search">
                <svg><use href="#o-filter"/></svg>
                <span class="search-box"><input type="text" placeholder="Search..." aria-label="Search"><i class="arrow down"></i></span>
            </div>
            <div class="tree">
                <div class="tree-main">
                    <ul>
                        <li class="dim"><svg><use href="#cam-row"/></svg>persp</li>
                        <li class="dim"><svg><use href="#cam-row"/></svg>top</li>
                        <li class="dim"><svg><use href="#cam-row"/></svg>front</li>
                        <li class="dim"><svg><use href="#cam-row"/></svg>side</li>
                        <li><svg><use href="#set-row"/></svg>defaultLightSet</li>
                        <li><svg><use href="#set-row"/></svg>defaultObjectSet</li>
                    </ul>
                    <div class="vscroll"><i class="arrow up"></i><i class="thumb"></i><i class="arrow down"></i></div>
                </div>
                <div class="hscroll"><i class="arrow left"></i><i class="thumb"></i><i class="arrow right"></i></div>
            </div>
            <span class="dots-h"></span>
        </section>

        <section class="view">
            <div class="view-frame">
                <nav class="menu"><button>View</button><button>Shading</button><button>Lighting</button><button>Show</button><button>Renderer</button><button>Panels</button></nav>
                <div class="view-tools">
                    <i class="vsep"></i>
                    <button aria-label="Arnold"><svg><use href="#v-a"/></svg></button>
                    <button aria-label="Frame region"><svg><use href="#v-frame"/></svg></button>
                    <button aria-label="Snapshot"><svg><use href="#v-dim1"/></svg></button>
                    <button aria-label="Crop"><svg><use href="#v-dim2"/></svg></button>
                    <button aria-label="Stack"><svg><use href="#v-dim3"/></svg></button>
                    <i class="vsep"></i>
                    <button aria-label="Select camera"><svg><use href="#v-cam"/></svg></button>
                    <button aria-label="Lock camera"><svg><use href="#v-camlock"/></svg></button>
                    <button aria-label="Camera attributes"><svg><use href="#v-camgear"/></svg></button>
                    <button aria-label="Bookmarks"><svg><use href="#v-mark"/></svg></button>
                    <button aria-label="Image plane"><svg><use href="#v-plane"/></svg></button>
                    <button aria-label="Pan and zoom"><svg><use href="#v-pan"/></svg></button>
                    <button aria-label="Blue pencil"><svg><use href="#v-pencil"/></svg></button>
                    <i class="vsep"></i>
                    <button class="on" aria-label="Grid"><svg><use href="#v-grid"/></svg></button>
                    <button aria-label="Film gate"><svg><use href="#v-film"/></svg></button>
                    <button aria-label="Resolution gate"><svg><use href="#v-res"/></svg></button>
                    <button aria-label="Gate mask"><svg><use href="#v-gate"/></svg></button>
                    <button aria-label="Field chart"><svg><use href="#v-safe"/></svg></button>
                    <button aria-label="Safe action"><svg><use href="#v-action"/></svg></button>
                    <button aria-label="Safe title"><svg><use href="#v-title"/></svg></button>
                    <i class="vsep"></i>
                    <button aria-label="Wireframe"><svg><use href="#v-wire"/></svg></button>
                    <button class="on" aria-label="Smooth shade"><svg><use href="#v-shade"/></svg></button>
                    <button aria-label="Default material"><svg><use href="#v-half"/></svg></button>
                    <button aria-label="Wireframe on shaded"><svg><use href="#v-wiresh"/></svg></button>
                    <button aria-label="Textured"><svg><use href="#v-tex"/></svg></button>
                    <button aria-label="Use all lights"><svg><use href="#v-light"/></svg></button>
                    <button aria-label="Shadows"><svg><use href="#v-shadow"/></svg></button>
                    <i class="vsep"></i>
                    <button aria-label="Ambient occlusion"><svg><use href="#v-ao"/></svg></button>
                    <button aria-label="Motion blur"><svg><use href="#v-blur"/></svg></button>
                    <button aria-label="Anti-aliasing"><svg><use href="#v-aa"/></svg></button>
                    <button aria-label="Depth of field"><svg><use href="#v-dof"/></svg></button>
                    <i class="vsep"></i>
                    <button aria-label="Isolate select"><svg><use href="#v-iso"/></svg></button>
                    <i class="vsep"></i>
                    <button aria-label="X-ray"><svg><use href="#v-xray"/></svg></button>
                    <button aria-label="X-ray active"><svg><use href="#v-xj"/></svg></button>
                    <button aria-label="X-ray joints"><svg><use href="#v-exp"/></svg></button>
                    <i class="vsep"></i>
                    <button aria-label="Exposure"><svg><use href="#v-iris"/></svg></button>
                    <input type="text" value="0.00" aria-label="Exposure value">
                    <button aria-label="Gamma"><svg><use href="#v-gamma"/></svg></button>
                    <input type="text" value="1.00" aria-label="Gamma value">
                    <button class="on" aria-label="View transform"><svg><use href="#v-on"/></svg></button>
                    <span class="select cs"><select aria-label="Color space"><option>ACES 1.0 SDR-video (sRGB)</option></select></span>
                </div>
                <div class="viewport">
                    <svg class="grid" id="grid" viewBox="0 0 1319 728" preserveAspectRatio="xMidYMid slice"></svg>
                    <svg class="viewcube" viewBox="0 0 54 62">
                        <defs><linearGradient id="face" x1="0" y1="0" x2="0" y2="1"><stop offset="0" stop-color="#acacac"/><stop offset="1" stop-color="#979797"/></linearGradient></defs>
                        <path d="M7 2h40l4 12H3z" fill="#ababab"/>
                        <path d="M2 14h50v2H2z" fill="#707070"/>
                        <path d="M2 16h50l-2 44H4z" fill="url(#face)"/>
                        <path d="M16 7h22" stroke="#808080" stroke-dasharray="2 1"/>
                        <text x="27" y="42">FRONT</text>
                    </svg>
                    <svg class="axis" viewBox="0 0 30 34">
                        <path d="M6 10v16" stroke="#0f0"/><path d="M6 26h12" stroke="#f22"/><path d="M4 25h4v4H4z" fill="#22f"/>
                        <text x="6" y="8" fill="#0f0">y</text><text x="21" y="26" fill="#f22">x</text>
                    </svg>
                    <span class="camera-name">persp</span>
                </div>
            </div>
        </section>

        <aside class="channelbox">
            <div class="channel-icons">
                <button aria-label="Manipulators"><svg><use href="#c-manip"/></svg></button>
                <button aria-label="Speed"><svg><use href="#c-speed"/></svg></button>
                <button aria-label="Hyperbolic"><svg><use href="#c-graph"/></svg></button>
            </div>
            <nav class="menu"><button>Channels</button><button>Edit</button><button>Object</button><button>Show</button></nav>
            <p class="hint">Select objects in the scene to view,<br>edit and set keyframes on channels<br>(attributes)</p>
            <span class="dots-h"></span>
            <div class="layers">
                <div class="tabs"><button class="active">Display</button><button>Anim</button></div>
                <div class="layers-body">
                    <nav class="menu"><button>Layers</button><button>Options</button><button>Help</button></nav>
                    <div class="layer-tools">
                        <button aria-label="Move layer up"><svg><use href="#ly-up"/></svg></button>
                        <button aria-label="Move layer down"><svg><use href="#ly-down"/></svg></button>
                        <i></i>
                        <button aria-label="New layer"><svg><use href="#ly-new"/></svg></button>
                        <button aria-label="New layer from selection"><svg><use href="#ly-sel"/></svg></button>
                    </div>
                    <div class="layer-list"></div>
                    <div class="hscroll"><i class="arrow left"></i><i class="thumb"></i><i class="arrow right"></i></div>
                </div>
            </div>
        </aside>
        <div class="side-tabs">
            <button class="active">Channel Box / Layer Editor</button>
            <button>Attribute Editor</button>
            <button>Render Settings</button>
        </div>
    </main>

    <section class="timeline">
        <span class="grip"></span>
        <div class="frames" id="frames"></div>
        <input class="num" type="text" value="0" aria-label="Current frame">
        <div class="transport">
            <button aria-label="Go to start"><svg><use href="#k-start"/></svg></button>
            <button aria-label="Step back"><svg><use href="#k-back"/></svg></button>
            <button aria-label="Previous key"><svg><use href="#k-prev"/></svg></button>
            <button aria-label="Play backwards"><svg><use href="#k-rev"/></svg></button>
            <button aria-label="Play forwards"><svg><use href="#k-play"/></svg></button>
            <button aria-label="Next key"><svg><use href="#k-next"/></svg></button>
            <button aria-label="Step forward"><svg><use href="#k-fwd"/></svg></button>
            <button aria-label="Go to end"><svg><use href="#k-end"/></svg></button>
        </div>
    </section>

    <section class="range">
        <span class="grip"></span>
        <input class="num" type="text" value="0" aria-label="Animation start">
        <div class="range-track">
            <div class="range-bar"><button aria-label="Range start"></button><span>0</span><i></i><span>48</span><button aria-label="Range end"></button></div>
        </div>
        <input class="num" type="text" value="1000" aria-label="Animation end">
        <i class="sep wide"></i>
        <button class="tb" aria-label="Add bookmark"><svg><use href="#b-mark"/></svg></button>
        <i class="sep wide"></i>
        <i class="caret"></i>
        <button class="field">No Character Set</button>
        <i class="caret"></i>
        <button class="field">No Anim Layer</button>
        <i class="sep wide"></i>
        <span class="select fps"><select aria-label="Frame rate"><option>24 fps</option></select></span>
        <div class="range-tools">
            <button class="tb" aria-label="Loop"><svg><use href="#loop"/></svg></button>
            <button class="tb on" aria-label="Cached playback"><svg><use href="#film"/></svg></button>
            <i class="sep"></i>
            <button class="tb" aria-label="Sound"><svg><use href="#sound"/></svg></button>
            <button class="tb" aria-label="Auto keyframe"><svg><use href="#autokey"/></svg></button>
            <button class="tb" aria-label="Animation preferences"><svg><use href="#runner"/></svg></button>
        </div>
    </section>

    <footer class="commandline">
        <span class="grip"></span>
        <div class="helpline"><svg><use href="#help"/></svg></div>
        <span class="grip"></span>
        <label for="mel">MEL</label>
        <input class="cmd" id="mel" type="text">
        <input class="result" type="text" readonly aria-label="Command result">
        <button class="tb" aria-label="Script editor"><svg><use href="#script"/></svg></button>
    </footer>

    <script src="script.js"></script>
</body>
</html>
```
FILE: styles.css
```css
* {
    box-sizing: border-box;
}

body {
    display: flex;
    flex-direction: column;
    height: 100vh;
    margin: 0;
    overflow: hidden;
    background-color: #444;
    color: #c4c4c4;
    font-family: "Noto Sans", "Open Sans", sans-serif;
    font-size: 11px;
    line-height: 16px;
}

button {
    padding: 0;
    border: 0;
    background: none;
    color: inherit;
    font: inherit;
    white-space: nowrap;
}

input,
select {
    min-width: 0;
    border: 0;
    border-radius: 2px;
    background-color: #2b2b2b;
    color: #c4c4c4;
    font: inherit;
}

button,
i,
.select {
    flex-shrink: 0;
}

svg {
    display: block;
}

.sprite {
    display: none;
}

/* icon paint */
.g { fill: #bebebe; }
.o { fill: #d99457; }
.t { fill: #43a7bf; }
.m { fill: #8f8f8f; }
.dm { fill: #6a6a6a; }
.hm { fill: #8c8c8c; }
.d { fill: #3c3c3c; }
.b { fill: #444; }
.nb { fill: #46678c; }
.lb { fill: #7db4d0; }
.nt { fill: #4a5a66; }
.nr { fill: #6a5650; }
.e { stroke: #3c3c3c; stroke-width: 1; }
.sg, .st, .so, .sd, .sm, .sw { fill: none; stroke-width: 1; }
.sg { stroke: #bebebe; }
.st { stroke: #43a7bf; }
.so { stroke: #d99457; }
.sd { stroke: #3c3c3c; }
.sm { stroke: #777; }
.sw { stroke: #e4e4e4; }
.w2 { stroke-width: 2; }
.w3 { stroke-width: 3; }
.w4 { stroke-width: 4; }
.w6 { stroke-width: 6; }
.dash { stroke-dasharray: 2 2; }
.dots { stroke-dasharray: 3 2; }
.lasso { stroke-dasharray: 5 3; }
.iris { stroke-dasharray: 4 1; }

svg text {
    text-anchor: middle;
}

.ipr { fill: #333; font-size: 8px; font-weight: bold; }
.type { fill: #d99457; font: 33px "Liberation Serif", serif; }
.svgt { fill: #444; font-size: 12px; font-weight: bold; }
.zeros { fill: #43a7bf; font-size: 11px; font-weight: bold; }
.maya-m { fill: #fff; font-size: 18px; font-weight: bold; }
.maya-s { fill: #fff; font-size: 7px; font-weight: bold; }
.va { fill: #fff; font-size: 10px; font-weight: bold; }
.vt { fill: #43a7bf; font: bold 11px "Liberation Serif", serif; }
.ont { fill: #25424d; font-size: 7px; font-weight: bold; }
.q { fill: #444; font-size: 14px; font-weight: bold; }
.br { fill: #333; font: bold 9px "Liberation Mono", monospace; }

/* shared controls */
.menu {
    display: flex;
    gap: 16px;
}

.grip {
    flex: none;
    align-self: stretch;
    width: 5px;
    margin: 4px 9px 4px 3px;
    background-image: radial-gradient(circle at 1px 1px, #777 1px, transparent 1px);
    background-size: 3px 3px;
}

.grip-h {
    width: 38px;
    height: 5px;
    margin: 3px 0;
    background-image: radial-gradient(circle at 1px 1px, #777 1px, transparent 1px);
    background-size: 3px 3px;
}

.dots-h {
    width: 85px;
    height: 1px;
    background: repeating-linear-gradient(90deg, #8a8a8a 0 1px, transparent 1px 3px);
}

.tb {
    display: flex;
    align-items: center;
    justify-content: center;
    width: 23px;
    height: 22px;
}

.tb svg,
.fold svg {
    width: 20px;
    height: 20px;
}

.fold {
    width: 23px;
}

.on {
    background-color: #5285a6;
    border-radius: 1px;
}

.sep {
    width: 22px;
    height: 20px;
    background: linear-gradient(#8f8f8f, #8f8f8f) center / 1px 20px no-repeat,
        linear-gradient(#8f8f8f, #8f8f8f) center / 3px 14px no-repeat;
}

.bracket {
    position: relative;
    border: 1px solid #0f0;
}

/* cuts the middle out of the frame so only brackets are left */
.bracket::before {
    content: "";
    position: absolute;
    top: -1px;
    bottom: -1px;
    left: 4px;
    right: 4px;
    background-color: #444;
}

.bracket svg {
    position: relative;
}

.caret {
    width: 19px;
    height: 5px;
    background: #8f8f8f;
    clip-path: polygon(5px 0, 13px 0, 9px 5px);
}

.field {
    width: 100px;
    height: 22px;
    padding-left: 6px;
    border: 1px solid #4f4f4f;
    border-radius: 2px;
    background-color: #404040;
    text-align: left;
}

.select {
    display: flex;
    height: 20px;
    border-radius: 2px;
    background-color: #5d5d5d;
    overflow: hidden;
}

.select select {
    flex: 1;
    padding: 0 4px;
    appearance: none;
    background-color: #5d5d5d;
}

.select::after {
    content: "";
    width: 19px;
    border-left: 1px solid #4b4b4b;
    background: linear-gradient(to bottom right, #d0d0d0 50%, transparent 50%) 9px 7px / 5px 6px no-repeat,
        linear-gradient(to bottom left, #d0d0d0 50%, transparent 50%) 4px 7px / 5px 6px no-repeat;
}

.arrow {
    width: 9px;
    height: 5px;
    background: #b0b0b0;
}

.up { clip-path: polygon(50% 0, 100% 100%, 0 100%); }
.down { clip-path: polygon(0 0, 100% 0, 50% 100%); }
.left { width: 5px; height: 9px; clip-path: polygon(100% 0, 100% 100%, 0 50%); }
.right { width: 5px; height: 9px; clip-path: polygon(0 0, 100% 50%, 0 100%); }

.tabs {
    display: flex;
    gap: 2px;
    height: 18px;
    padding: 2px 2px 0;
    background-color: #373737;
}

.tabs button {
    padding: 0 9px;
    border: 1px solid #2e2e2e;
    border-bottom: 0;
    border-radius: 3px 3px 0 0;
    color: #8a8a8a;
    line-height: 15px;
}

.tabs .active {
    border-color: #444;
    background-color: #444;
    color: #fff;
}

/* top bars */
.menubar {
    display: flex;
    align-items: center;
    height: 26px;
}

.home {
    width: 18px;
    margin: 0 12px 0 7px;
}

.home svg {
    width: 18px;
    height: 18px;
}

.workspace {
    display: flex;
    align-items: center;
    gap: 4px;
    margin-left: auto;
    padding-right: 2px;
}

.ws {
    width: 192px;
}

.statusline {
    display: flex;
    align-items: center;
    height: 29px;
    border-bottom: 2px solid #373737;
}

.statusline .grip {
    margin-right: 6px;
}

.mode {
    width: 98px;
}

.account {
    display: flex;
    align-items: center;
    gap: 1px;
    height: 22px;
    padding: 0 5px 0 1px;
    background-color: #5d5d5d;
    color: #f0f0f0;
}

.account svg {
    width: 20px;
    height: 20px;
}

.account::after {
    content: "";
    width: 9px;
    height: 6px;
    background: #f0f0f0;
    clip-path: polygon(0 0, 100% 0, 50% 100%);
}

.sidebar-toggles {
    display: flex;
    margin-left: auto;
    padding-right: 3px;
}

/* shelf */
.shelf {
    display: flex;
    height: 70px;
    padding-top: 3px;
    border-bottom: 2px solid #373737;
}

.shelf .grip {
    margin: 0 6px 4px 3px;
}

.shelf-options {
    display: flex;
    flex-direction: column;
    justify-content: space-between;
    width: 20px;
    margin: 0 3px 3px 0;
    padding: 6px 2px 8px;
    background-color: #373737;
}

.shelf-options svg {
    width: 16px;
    height: 16px;
}

.shelf-body {
    flex: 1;
    margin-right: 3px;
}

.shelf-tabs {
    padding-left: 1px;
}

.shelf-tabs button {
    padding: 0 10px;
}

.shelf-items {
    display: flex;
    align-items: center;
    height: 43px;
    padding: 0 5px 0 4px;
}

.shelf-items button {
    display: flex;
    align-items: center;
    justify-content: center;
    width: 35px;
    height: 34px;
}

.shelf-items svg {
    width: 26px;
    height: 26px;
}

.shelf-items .bracket::before {
    left: 6px;
    right: 6px;
}

.divider {
    width: 34px;
    height: 35px;
    background: linear-gradient(#a0a0a0, #a0a0a0) center / 2px 100% no-repeat;
}

.shelf-scroll {
    display: flex;
    flex-direction: column;
    align-items: center;
    justify-content: space-between;
    width: 12px;
    height: 35px;
    margin-left: auto;
    padding: 4px 0;
    background-color: #373737;
}

.knob {
    width: 9px;
    height: 9px;
    border-radius: 50%;
    background-color: #5d5d5d;
}

/* work area */
.workarea {
    display: flex;
    flex: 1;
    min-height: 0;
}

.toolbox {
    display: flex;
    flex-direction: column;
    align-items: center;
    gap: 1px;
    width: 46px;
    padding-bottom: 5px;
    border-right: 2px solid #373737;
}

.toolbox button,
.toolbox button svg {
    width: 36px;
    height: 36px;
}

.toolbox hr {
    width: 36px;
    height: 2px;
    margin: 4px 0;
    border: 0;
    background-color: #a0a0a0;
}

.toolbox .tall {
    margin-top: 78px;
}

.maya-logo {
    width: 36px;
    height: 36px;
    margin-top: auto;
}

.outliner {
    display: flex;
    flex-direction: column;
    width: 266px;
    border-right: 2px solid #373737;
}

.outliner .menu {
    height: 25px;
    padding: 2px 11px;
}

.search {
    display: flex;
    align-items: center;
    gap: 6px;
    height: 21px;
    padding: 0 5px 0 7px;
}

.search svg {
    width: 18px;
    height: 18px;
}

.search-box {
    display: flex;
    flex: 1;
    align-items: center;
    height: 18px;
    padding-right: 4px;
    border-radius: 2px;
    background-color: #2b2b2b;
}

.search-box input {
    flex: 1;
    padding: 0 3px;
}

.search-box input::placeholder {
    color: #858585;
}

.tree {
    display: flex;
    flex: 1;
    flex-direction: column;
    margin: 1px 4px 2px;
    background-color: #373737;
}

.tree-main {
    display: flex;
    flex: 1;
}

.tree ul {
    flex: 1;
    margin: 0;
    padding: 0 0 0 34px;
    list-style: none;
}

.tree li {
    display: flex;
    align-items: center;
    gap: 2px;
    height: 20px;
}

.tree li svg {
    width: 18px;
    height: 18px;
}

.tree .dim {
    color: #6b6464;
}

.vscroll {
    display: flex;
    flex-direction: column;
    align-items: center;
    gap: 4px;
    width: 10px;
    padding: 4px 0;
}

.vscroll .thumb {
    flex: 1;
    width: 10px;
    border-radius: 3px;
    background-color: #5d5d5d;
}

.hscroll {
    display: flex;
    align-items: center;
    gap: 5px;
    height: 10px;
    padding: 0 16px 0 3px;
}

.hscroll .thumb {
    flex: 1;
    height: 10px;
    border-radius: 4px;
    background-color: #5d5d5d;
}

.outliner .dots-h,
.channelbox .dots-h {
    align-self: center;
}

.outliner .dots-h {
    margin-bottom: 7px;
}

/* viewport */
.view {
    flex: 1;
    min-width: 0;
    padding: 3px;
    border-right: 2px solid #373737;
}

.view-frame {
    display: flex;
    flex-direction: column;
    height: 100%;
    border: 1px solid #858585;
}

.view-frame .menu {
    height: 18px;
    padding-left: 8px;
}

.view-tools {
    display: flex;
    align-items: center;
    height: 21px;
    padding-bottom: 1px;
}

.view-tools button {
    width: 19px;
    height: 18px;
}

.view-tools button svg {
    width: 18px;
    height: 18px;
}

.view-tools input {
    width: 38px;
    height: 16px;
    margin: 0 2px;
    padding: 0 5px;
}

.vsep {
    width: 11px;
    height: 16px;
    background: linear-gradient(#8f8f8f, #8f8f8f) center / 1px 16px no-repeat,
        linear-gradient(#8f8f8f, #8f8f8f) center / 3px 10px no-repeat;
}

.cs {
    width: 198px;
    height: 18px;
    margin-left: 2px;
}

.viewport {
    position: relative;
    flex: 1;
    min-height: 0;
    background-color: #5b5b5b;
}

.grid {
    width: 100%;
    height: 100%;
}

.grid line {
    stroke: #404040;
    shape-rendering: crispEdges;
}

.grid .origin {
    stroke-width: 2;
}

.viewcube {
    position: absolute;
    top: 28px;
    right: 31px;
    width: 54px;
    height: 62px;
}

.viewcube text {
    fill: #555;
    font: bold 9px "DejaVu Sans", sans-serif;
}

.axis {
    position: absolute;
    bottom: 17px;
    left: 19px;
    width: 30px;
    height: 34px;
}

.axis text {
    font-size: 8px;
    font-weight: bold;
}

.camera-name {
    position: absolute;
    bottom: 5px;
    left: 0;
    right: 0;
    padding-right: 16px;
    color: #fff;
    font-size: 10px;
    font-weight: bold;
    text-align: center;
}

/* channel box */
.channelbox {
    display: flex;
    flex-direction: column;
    width: 263px;
}

.channel-icons {
    display: flex;
    gap: 5px;
    justify-content: flex-end;
    height: 25px;
    padding: 3px 5px 0;
}

.channel-icons button,
.channel-icons svg {
    width: 16px;
    height: 16px;
}

.channelbox .menu {
    padding-left: 12px;
}

.hint {
    display: grid;
    flex: 1;
    align-content: center;
    margin: 0;
    font-family: "Open Sans", sans-serif;
    font-weight: 600;
    line-height: 13px;
    text-align: center;
}

.layers {
    margin: 8px 3px 3px 4px;
    background-color: #373737;
}

.layers-body {
    padding: 3px;
    border: 1px solid #2b2b2b;
    border-top: 0;
    background-color: #444;
}

.layers .menu {
    padding-left: 6px;
}

.layer-tools {
    display: flex;
    justify-content: flex-end;
    gap: 5px;
    height: 27px;
    padding: 4px 3px;
}

.layer-tools button,
.layer-tools svg {
    width: 18px;
    height: 18px;
}

.layer-list {
    height: 137px;
    background-color: #2b2b2b;
}

.layers .hscroll {
    height: 12px;
    padding: 0 3px;
    background-color: #373737;
}

.layers .hscroll .thumb {
    flex: 0 1 154px;
}

.layers .right {
    margin-left: auto;
}

.side-tabs {
    display: flex;
    flex-direction: column;
    gap: 2px;
    width: 16px;
    padding-top: 2px;
    background-color: #373737;
}

.side-tabs button {
    width: 15px;
    padding: 9px 0;
    border: 1px solid #2e2e2e;
    border-left: 0;
    border-radius: 0 3px 3px 0;
    color: #8a8a8a;
    line-height: 14px;
    writing-mode: vertical-rl;
}

.side-tabs .active {
    border-color: #444;
    background-color: #444;
    color: #e0e0e0;
}

/* timeline */
.timeline,
.range,
.commandline {
    display: flex;
    align-items: center;
    border-top: 2px solid #373737;
}

.timeline {
    height: 51px;
}

.timeline .grip,
.range .grip {
    margin-right: 8px;
}

.num {
    width: 50px;
    height: 20px;
    padding: 0 5px;
}

.frames {
    display: flex;
    flex: 1;
    align-self: stretch;
    padding: 0 9px 0 8px;
    background: linear-gradient(#2b2b2b, #2b2b2b) 0 8px / 100% 32px no-repeat;
}

.frame {
    flex: 1;
    min-width: 0;
    padding: 7px 0 0 7px;
    color: #8f8f8f;
    background: linear-gradient(#1e1e1e, #1e1e1e) 0 0 / 1px 8px no-repeat,
        linear-gradient(#999, #999) 0 24px / 1px 16px no-repeat,
        linear-gradient(#1e1e1e, #1e1e1e) 0 40px / 1px 8px no-repeat,
        linear-gradient(#686868, #686868) 0 40px / 100% 2px no-repeat;
}

.frame.current {
    background: linear-gradient(#999, #999) 0 24px / 1px 16px no-repeat,
        linear-gradient(#3b3b3b, #3b3b3b) 0 8px / 31px 32px no-repeat,
        linear-gradient(#5d5d5d, #5d5d5d) 0 0 / 31px 48px no-repeat;
}

.frame output {
    display: block;
    width: 12px;
    margin-left: -3px;
    border-radius: 3px;
    background-color: #2b2b2b;
    color: #fff;
    text-align: center;
}

.timeline .num {
    margin-left: 9px;
}

.transport {
    display: flex;
    margin: 0 4px 0 5px;
}

.transport button {
    width: 28px;
    height: 20px;
}

.transport svg {
    width: 20px;
    height: 20px;
    margin: auto;
}

/* range slider */
.range {
    height: 38px;
}

.range-track {
    flex: 1;
    height: 20px;
    margin: 0 9px;
    padding: 2px;
    border-radius: 2px;
    background-color: #2b2b2b;
}

.range-bar {
    display: grid;
    grid-template-columns: 8px 22px 1fr 30px 8px;
    align-items: center;
    width: 82px;
    height: 16px;
    background-color: #444;
    text-align: center;
}

.range-bar button {
    height: 16px;
    background-color: #999;
}

.range-bar i {
    justify-self: end;
    width: 4px;
    height: 10px;
    background-image: radial-gradient(circle at 1px 1px, #888 1px, transparent 1px);
    background-size: 3px 3px;
}

.wide {
    width: 42px;
}

.range .field {
    width: 102px;
    height: 20px;
}

.range .field + .caret {
    width: 30px;
    clip-path: polygon(14px 0, 22px 0, 18px 5px);
}

.fps {
    width: 95px;
    margin-left: 3px;
}

.range-tools {
    display: flex;
    align-items: center;
    gap: 6px;
    padding: 0 6px 0 13px;
}

.range-tools .sep {
    margin: 0 3px;
}

/* command line */
.commandline {
    height: 33px;
}

.commandline .grip {
    margin-right: 8px;
}

.helpline {
    display: flex;
    flex: 800;
    align-items: center;
    align-self: stretch;
    border-right: 2px solid #373737;
}

.helpline svg {
    width: 20px;
    height: 20px;
}

.cmd,
.result {
    height: 20px;
}

.cmd {
    flex: 398;
    margin: 0 5px 0 8px;
}

.result {
    flex: 618;
    margin-right: 8px;
}

.commandline .tb {
    margin-right: 6px;
}
```
FILE: script.js
```js
// perspective ground grid: far and near edges of the plane, in viewport units
const FAR = { left: [344, 238], right: [980, 240] };
const NEAR = { left: [74, 592], right: [1243, 594] };
const CELLS = 24;

function mix(a, b, t) {
    return [a[0] + (b[0] - a[0]) * t, a[1] + (b[1] - a[1]) * t];
}

function addLine(svg, a, b, isOrigin) {
    const line = document.createElementNS('http://www.w3.org/2000/svg', 'line');
    line.setAttribute('x1', a[0]);
    line.setAttribute('y1', a[1]);
    line.setAttribute('x2', b[0]);
    line.setAttribute('y2', b[1]);
    if (isOrigin) {
        line.classList.add('origin');
    }
    svg.appendChild(line);
}

function drawGrid() {
    const svg = document.getElementById('grid');
    const farWidth = FAR.right[0] - FAR.left[0];
    const nearWidth = NEAR.right[0] - NEAR.left[0];

    for (let i = 0; i <= CELLS; i++) {
        const k = i / CELLS;
        const width = 1 / ((1 - k) / farWidth + k / nearWidth);
        const t = (width - farWidth) / (nearWidth - farWidth);
        addLine(svg, mix(FAR.left, NEAR.left, t), mix(FAR.right, NEAR.right, t), i === CELLS / 2);
        addLine(svg, mix(FAR.left, FAR.right, k), mix(NEAR.left, NEAR.right, k), i === CELLS / 2);
    }
}

function drawFrames() {
    const frames = document.getElementById('frames');
    for (let i = 0; i <= 48; i++) {
        const frame = document.createElement('div');
        frame.className = i === 0 ? 'frame current' : 'frame';
        frame.textContent = i;
        if (i === 0) {
            const output = document.createElement('output');
            output.textContent = i;
            frame.appendChild(output);
        }
        frames.appendChild(frame);
    }
}

drawGrid();
drawFrames();
```
